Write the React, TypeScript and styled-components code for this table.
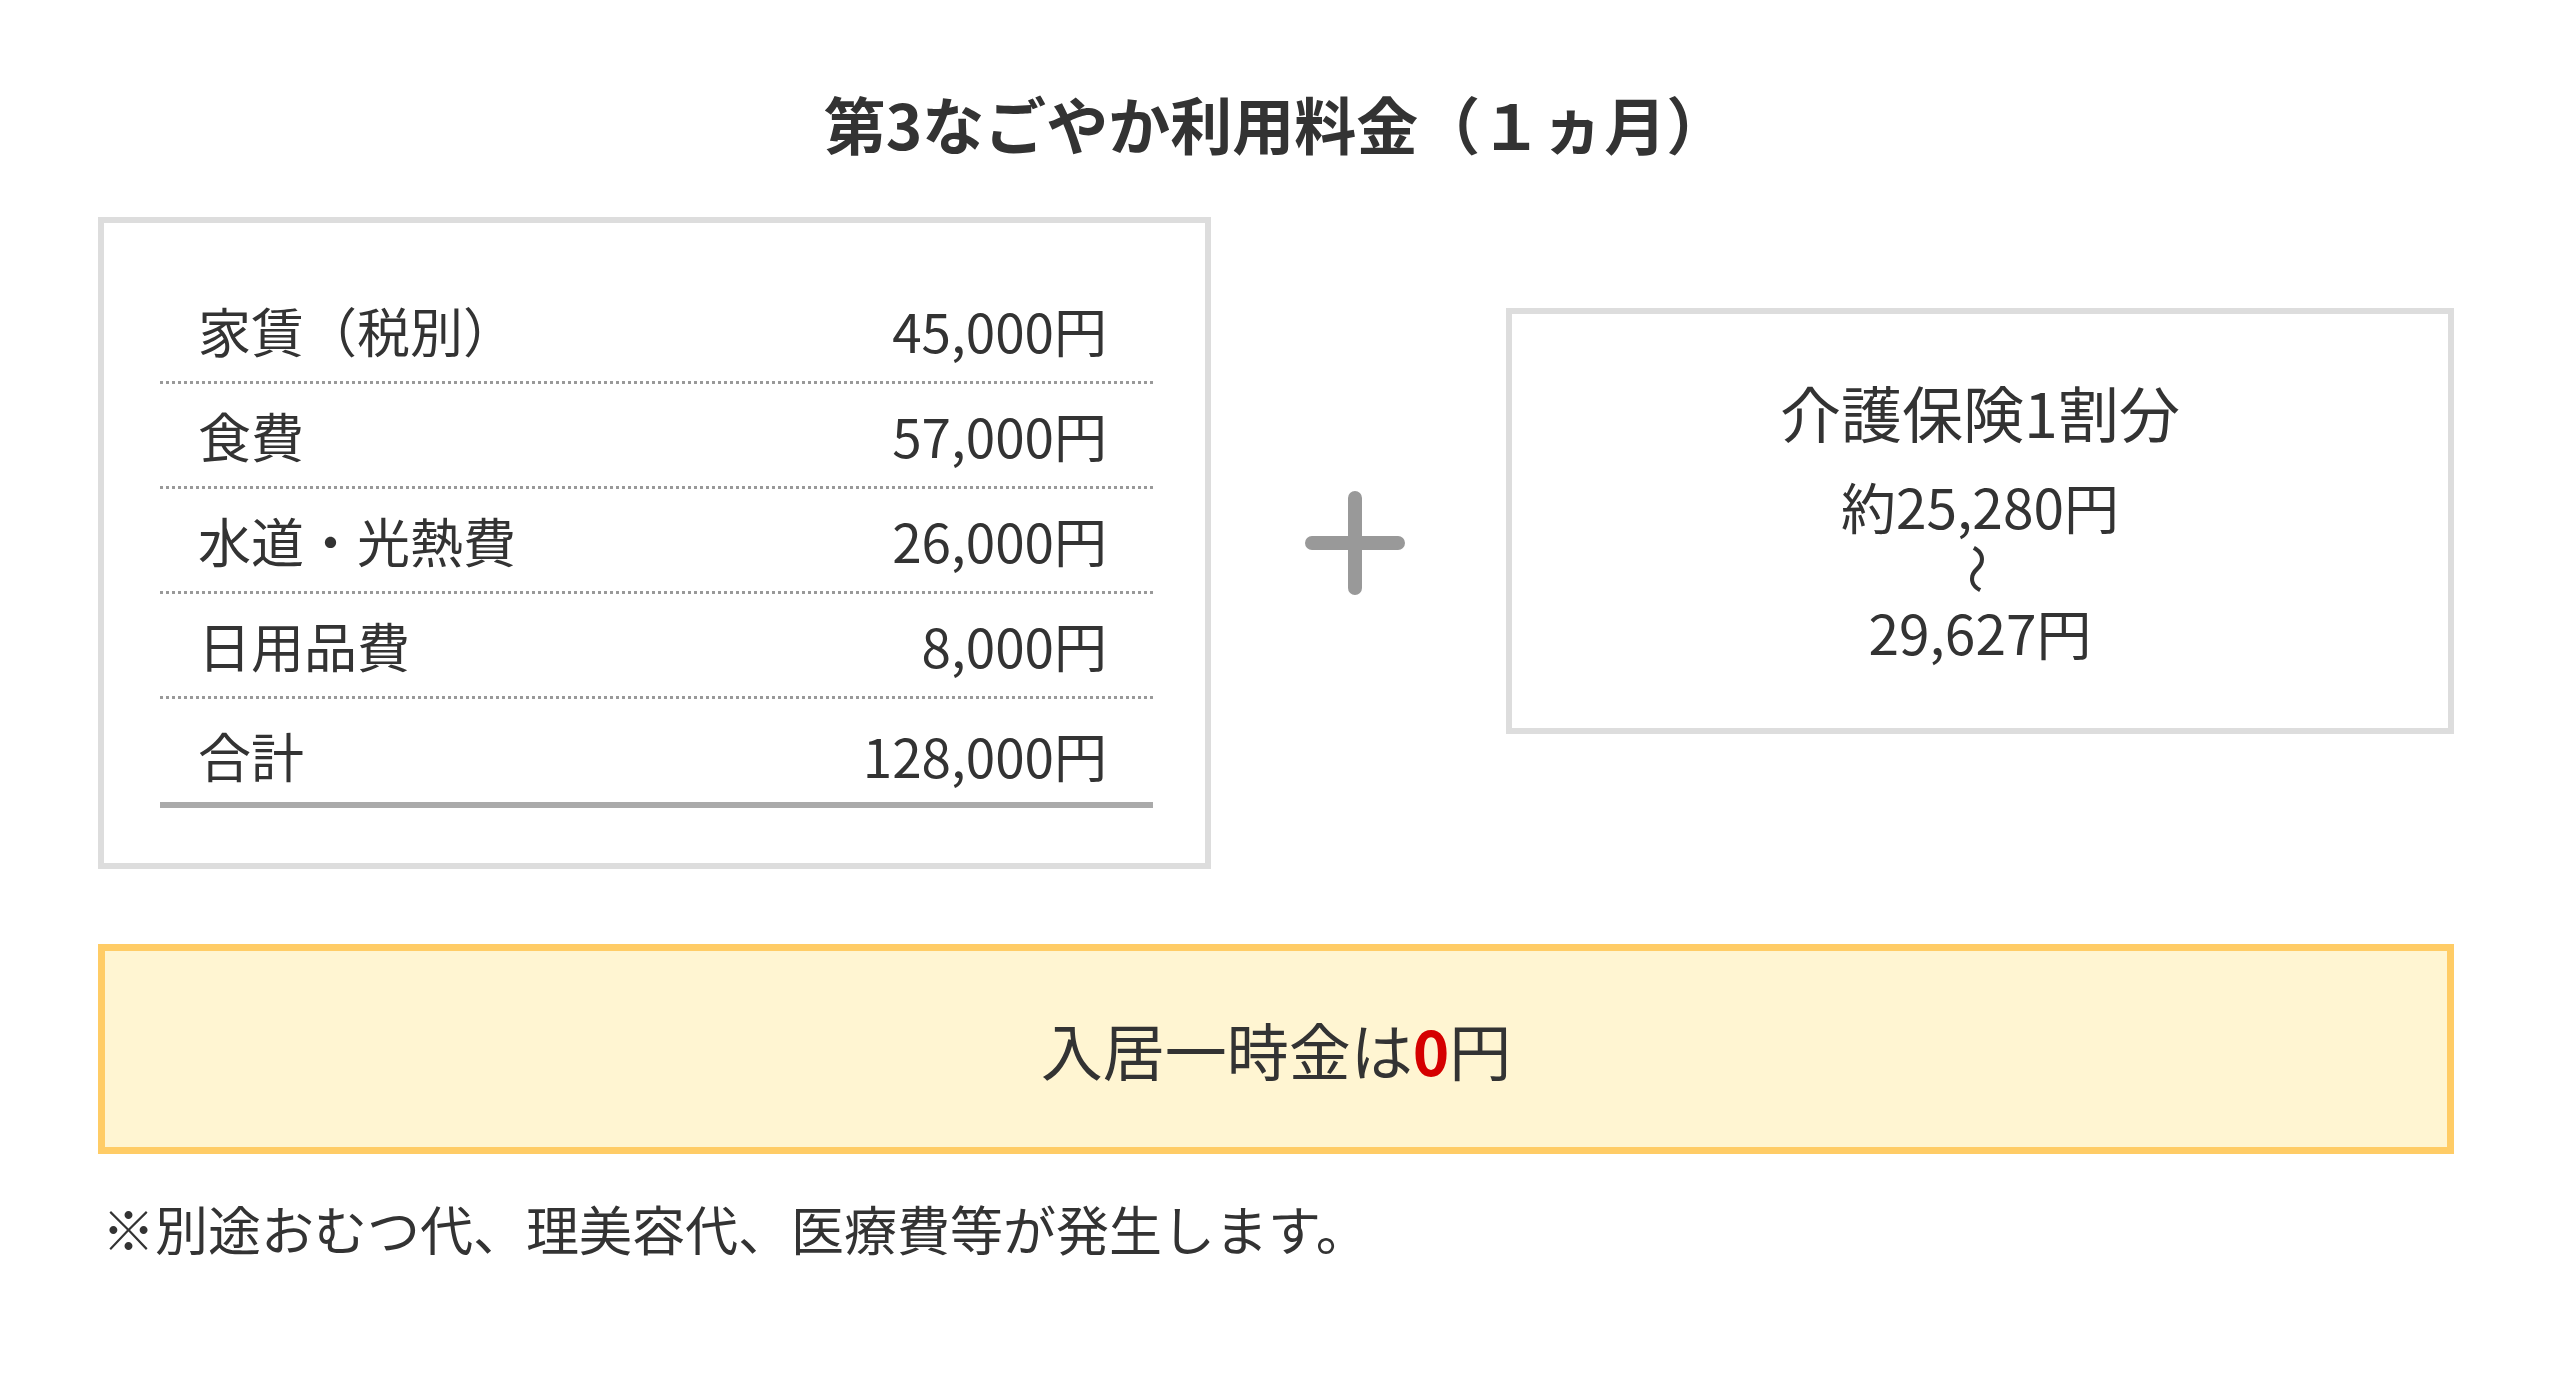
import React from 'react';
import styled, { createGlobalStyle } from 'styled-components';

const GlobalStyle = createGlobalStyle`
  body {
    margin: 0;
    background: #ffffff;
    color: #333333;
    font-family: 'Noto Sans CJK JP', 'Noto Sans', sans-serif;
  }
`;

const Page = styled.div`
  width: 2356px;
  margin-left: 98px;
`;

const Title = styled.h2`
  margin: 0 0 48px;
  padding-top: 77px;
  line-height: 92px;
  font-size: 62px;
  font-weight: bold;
  text-align: center;
  color: #333333;
`;

const PlanRow = styled.div`
  display: flex;
  align-items: flex-start;
`;

const FeeBox = styled.div`
  box-sizing: border-box;
  width: 1113px;
  height: 652px;
  border: 6px solid #dddddd;
  padding: 56px 52px 0 56px;
`;

const FeeRow = styled.div<{ total?: boolean }>`
  box-sizing: border-box;
  height: ${({ total }) => (total ? '109px' : '105px')};
  display: flex;
  align-items: center;
  justify-content: space-between;
  padding: ${({ total }) => (total ? '8px 46px 0 38px' : '0 46px 0 38px')};
  border-bottom: ${({ total }) => (total ? '6px solid #aaaaaa' : '3px dotted #999999')};
  font-size: 53px;
  color: #333333;
`;

const PlusCell = styled.div`
  flex: 1;
  height: 652px;
  display: flex;
  align-items: center;
  justify-content: center;
  padding-right: 8px;
`;

const CareBox = styled.div`
  box-sizing: border-box;
  width: 948px;
  height: 426px;
  margin-top: 91px;
  border: 6px solid #dddddd;
  padding-top: 58px;
  text-align: center;
`;

const CareTitle = styled.div`
  font-size: 61px;
  line-height: 80px;
`;

const CareAmount = styled.div`
  margin-top: 22px;
  font-size: 55px;
  line-height: 62px;
`;

const Wave = styled.span`
  display: inline-block;
  font-size: 50px;
  transform: rotate(90deg);
`;

const EntryFee = styled.div`
  box-sizing: border-box;
  height: 210px;
  margin-top: 75px;
  border: 7px solid #ffcc66;
  background: #fff5d2;
  display: flex;
  align-items: center;
  justify-content: center;
  font-size: 62px;
  color: #333333;
`;

const Zero = styled.span`
  color: #d50000;
  font-weight: bold;
`;

const Note = styled.p`
  margin: 37px 0 0 4px;
  font-size: 53px;
  line-height: 75px;
  color: #333333;
`;

const fees = [
  { label: '家賃（税別）', value: '45,000円' },
  { label: '食費', value: '57,000円' },
  { label: '水道・光熱費', value: '26,000円' },
  { label: '日用品費', value: '8,000円' },
];

function App() {
  return (
    <Page>
      <GlobalStyle />
      <Title>第3なごやか利用料金（１ヵ月）</Title>
      <PlanRow>
        <FeeBox>
          {fees.map((fee) => (
            <FeeRow key={fee.label}>
              <span>{fee.label}</span>
              <span>{fee.value}</span>
            </FeeRow>
          ))}
          <FeeRow total>
            <span>合計</span>
            <span>128,000円</span>
          </FeeRow>
        </FeeBox>
        <PlusCell>
          <svg width='100' height='104' viewBox='0 0 100 104'>
            <path d='M50 7 V97 M7 52 H93' stroke='#999999' strokeWidth='14' strokeLinecap='round' fill='none' />
          </svg>
        </PlusCell>
        <CareBox>
          <CareTitle>介護保険1割分</CareTitle>
          <CareAmount>
            約25,280円
            <br />
            <Wave>〜</Wave>
            <br />
            29,627円
          </CareAmount>
        </CareBox>
      </PlanRow>
      <EntryFee>
        入居一時金は<Zero>0</Zero>円
      </EntryFee>
      <Note>※別途おむつ代、理美容代、医療費等が発生します。</Note>
    </Page>
  );
}

export default App;
